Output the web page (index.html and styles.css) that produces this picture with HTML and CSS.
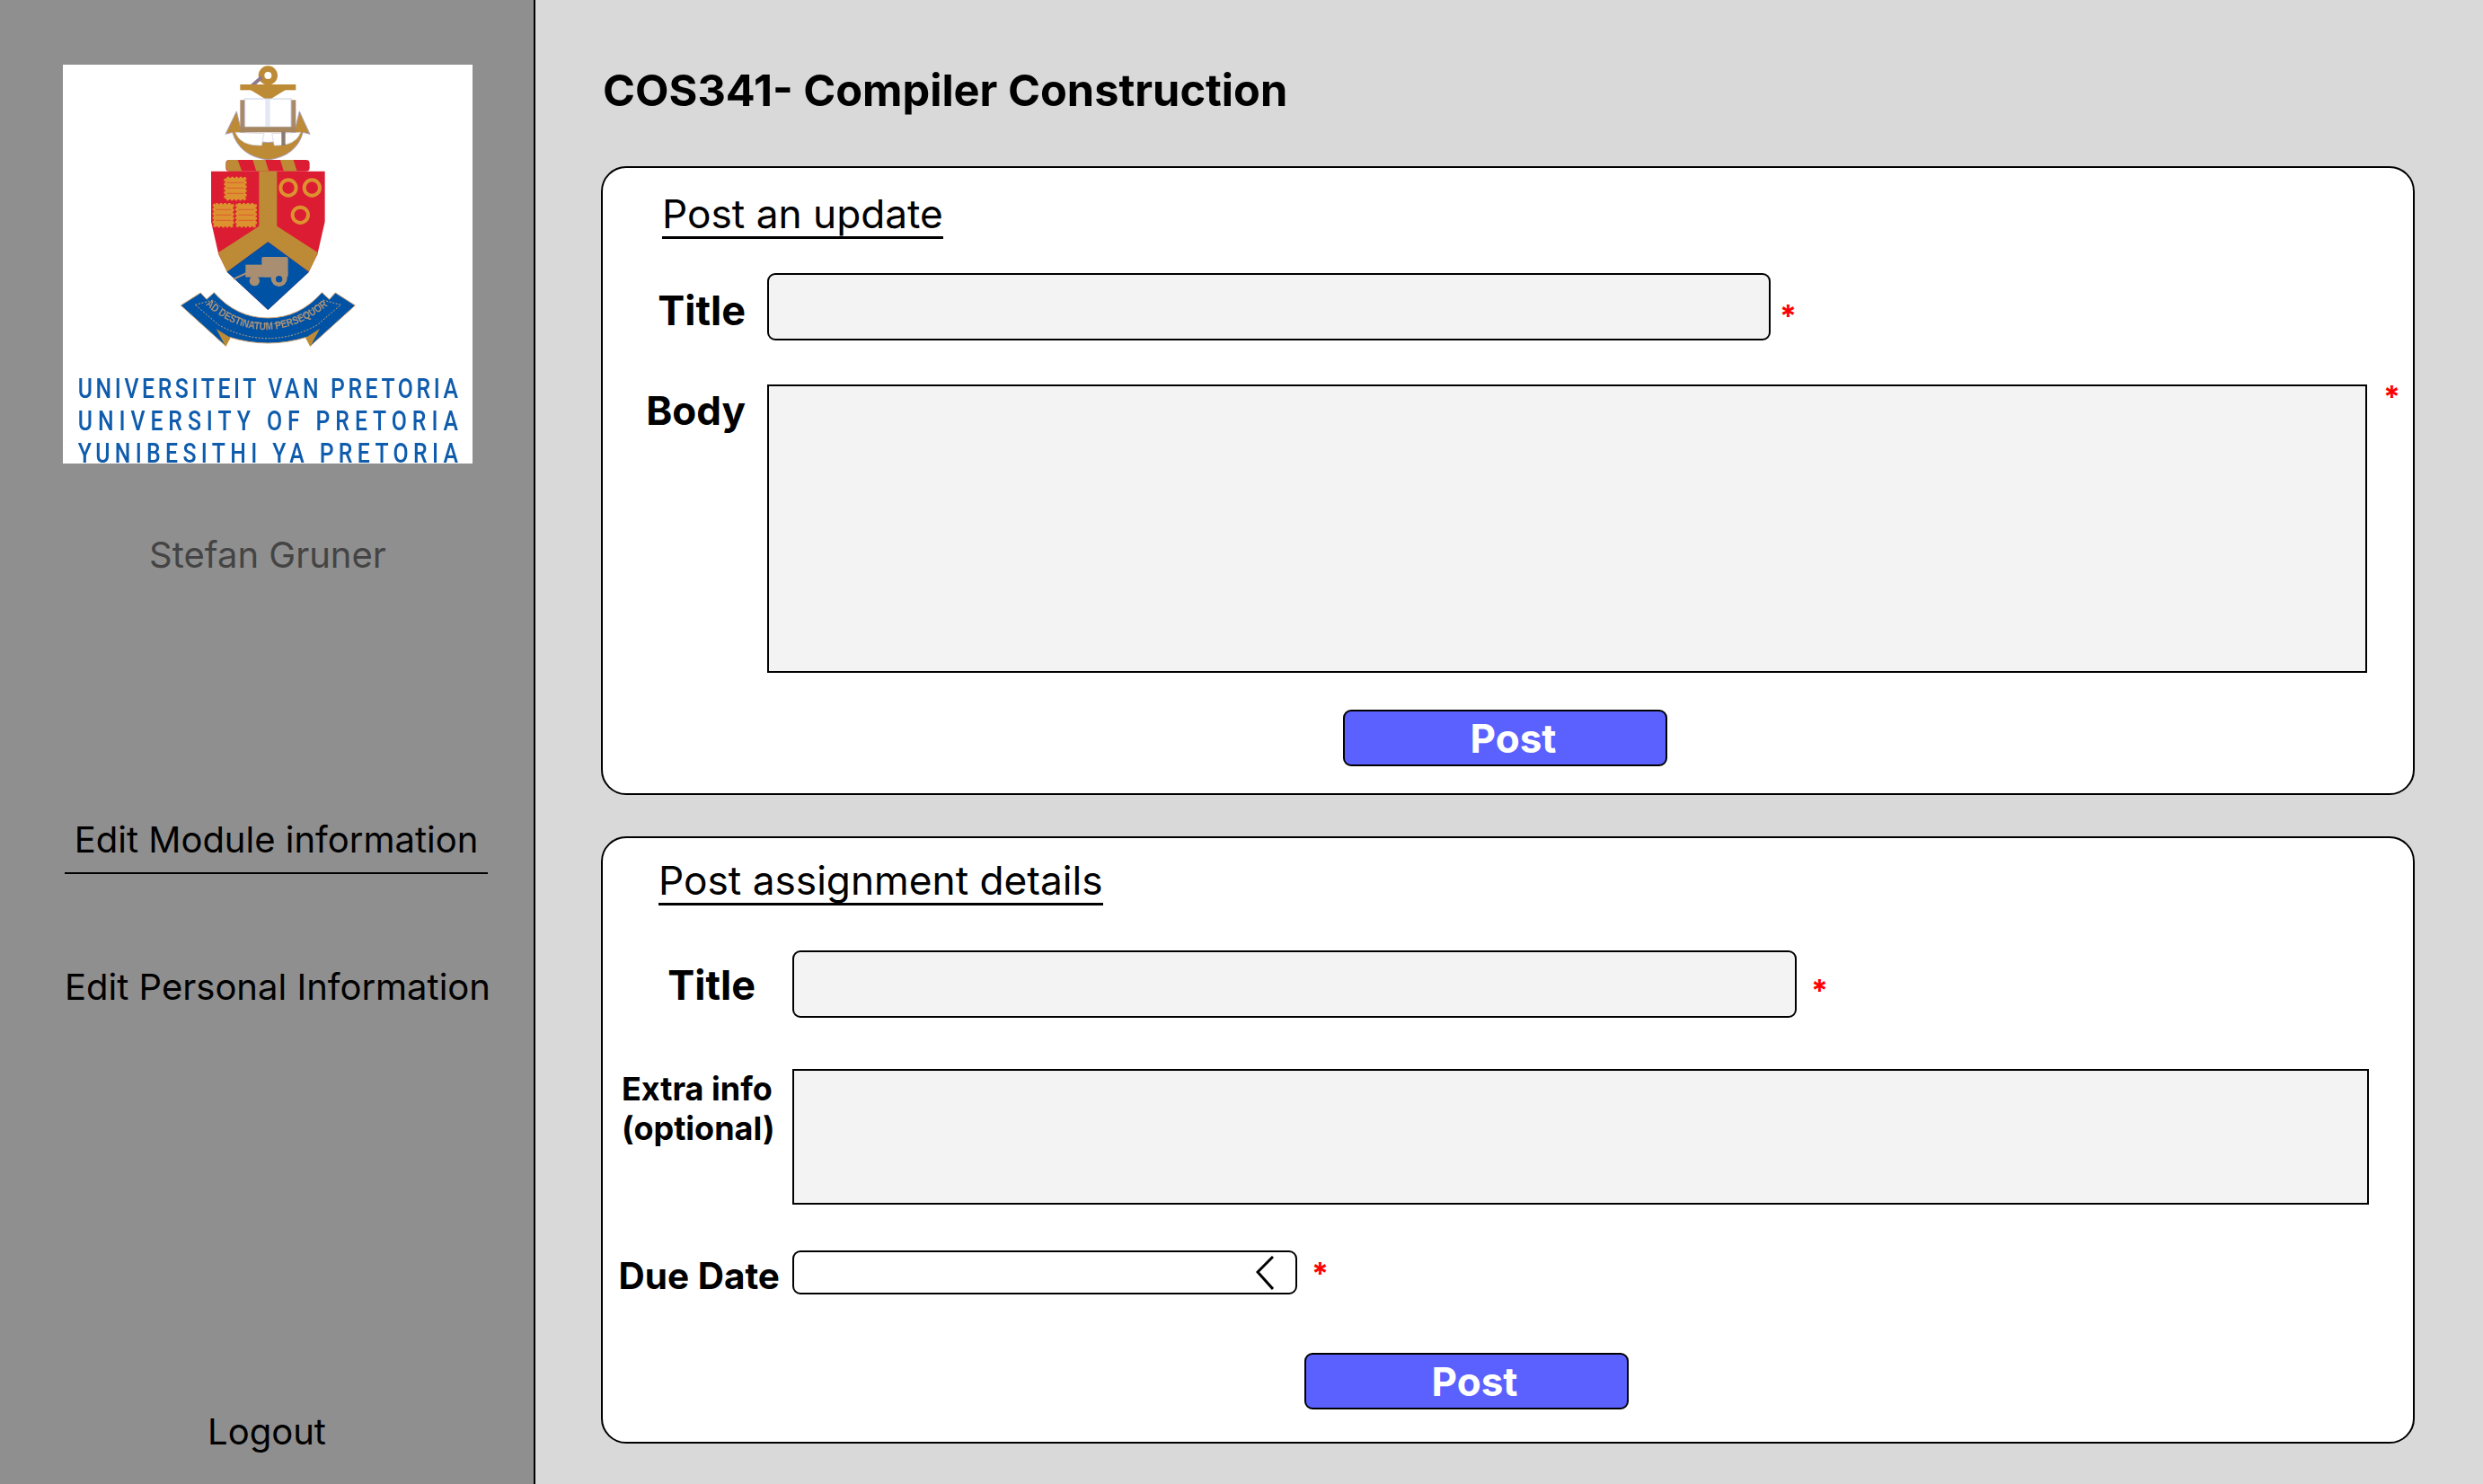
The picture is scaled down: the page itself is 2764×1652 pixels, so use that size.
FILE: index.html
```html
<!DOCTYPE html>
<html lang="en">
<head>
  <meta charset="UTF-8">
  <meta name="viewport" content="width=device-width, initial-scale=1.0">
  <title>COS341 - Compiler Construction</title>
  <link rel="stylesheet" href="styles.css">
</head>
<body>
  <!-- Sidebar -->
  <aside class="sidebar">
    <div class="logo">
      <svg class="logo-art" viewBox="0 0 456 444" width="456" height="444">
        <g transform="translate(110 -12) scale(.3333)">
          <!-- anchor -->
          <circle cx="355" cy="72" r="22" fill="none" stroke="#bd8a36" stroke-width="20"/>
          <path d="M302 106 L334 78" stroke="#8d7a8e" stroke-width="12"/>
          <rect x="262" y="102" width="186" height="19" fill="#bd8a36"/>
          <path d="M290 116 L355 156 L420 116 Z" fill="#bd8a36"/>
          <path d="M213 268 L250 192 L264 250 Q300 296 355 296 Q410 296 446 250 L460 192 L495 268 L472 262 Q450 342 355 354 Q260 342 236 262 Z" fill="#bd8a36" stroke="#a9a3c4" stroke-width="3"/>
          <path d="M246 262 Q262 308 334 306 L342 266 Z M464 262 Q448 308 376 306 L368 266 Z" fill="#fff" stroke="#c9cce0" stroke-width="2"/>
          <!-- book -->
          <rect x="262" y="154" width="18" height="96" fill="#a98a68"/>
          <rect x="430" y="154" width="18" height="96" fill="#a98a68"/>
          <rect x="278" y="150" width="154" height="94" fill="#fff" stroke="#c9cce0" stroke-width="3"/>
          <rect x="346" y="150" width="16" height="94" fill="#e4e8f2"/>
          <rect x="262" y="244" width="186" height="18" fill="#a5865f"/>
          <rect x="400" y="260" width="13" height="46" fill="#8d7a6e"/>
          <!-- wreath -->
          <rect x="214" y="354" width="280" height="38" rx="12" fill="#dc1c32"/>
          <path d="M214 368 Q216 354 228 354 L254 354 L268 392 L222 392 Q214 384 214 368 Z M304 354 L346 354 L358 392 L316 392 Z M396 354 L440 354 L452 392 L408 392 Z" fill="#bd8a36"/>
          <!-- shield -->
          <path d="M165 392 L545 392 L545 560 L520 670 L490 730 L355 855 L220 730 L190 670 L165 560 Z" fill="#dc1c32"/>
          <path d="M325 392 L385 392 L385 575 L522 664 L492 728 L355 628 L218 728 L188 664 L325 575 Z" fill="#bd8a36"/>
          <path d="M355 628 L492 728 L355 855 L218 728 Z" fill="#0052a5"/>
          <!-- wheat sheaves -->
          <g fill="#dd9230" stroke="#dd9230" stroke-width="8" stroke-dasharray="8 6">
            <rect x="212" y="414" width="68" height="72" rx="6"/>
            <rect x="174" y="502" width="64" height="74" rx="6"/>
            <rect x="250" y="502" width="64" height="74" rx="6"/>
          </g>
          <g fill="none" stroke="#dc1c32" stroke-width="3" opacity=".45">
            <path d="M218 430 H274 M218 448 H274 M218 466 H274 M180 520 H232 M180 538 H232 M180 556 H232 M256 520 H308 M256 538 H308 M256 556 H308"/>
          </g>
          <!-- rings -->
          <g fill="none" stroke="#dd9230" stroke-width="12">
            <circle cx="423" cy="447" r="26"/>
            <circle cx="502" cy="447" r="26"/>
            <circle cx="463" cy="538" r="26"/>
          </g>
          <!-- wagon -->
          <g fill="#a98e72">
            <rect x="334" y="678" width="88" height="68" rx="6"/>
            <rect x="280" y="704" width="56" height="42"/>
            <circle cx="310" cy="758" r="17"/>
            <circle cx="392" cy="750" r="27"/>
          </g>
          <circle cx="392" cy="752" r="11" fill="#0052a5"/>
          <path d="M240 752 L284 732" stroke="#a98e72" stroke-width="6"/>
          <!-- motto ribbon -->
          <path d="M64 840 L130 798 L150 820 L175 797 Q250 882 355 882 Q460 882 535 797 L560 820 L580 798 L646 840 L498 974 L484 946 Q420 966 355 966 Q290 966 226 946 L212 974 Z" fill="#0052a5" stroke="#c9a070" stroke-width="3"/>
          <path d="M182 918 L230 948 L214 978 Z M528 918 L480 948 L496 978 Z" fill="#bd8a36"/>
          <path d="M112 838 L172 822 Q250 902 355 902 Q460 902 538 822 L598 838 L520 905 Q440 950 355 950 Q270 950 190 905 Z" fill="none" stroke="#c9a070" stroke-width="3" stroke-dasharray="6 5"/>
          <path id="motto" d="M146 838 Q345 1008 566 832" fill="none"/>
          <text class="motto-text" fill="#ab9279">
            <textPath href="#motto" textLength="450" lengthAdjust="spacingAndGlyphs">AD DESTINATUM PERSEQUOR</textPath>
          </text>
        </g>
        <g class="logo-text" transform="scale(.8 1)">
          <text x="21" y="371" textLength="529">UNIVERSITEIT VAN PRETORIA</text>
          <text x="21" y="407" textLength="529">UNIVERSITY OF PRETORIA</text>
          <text x="21" y="443" textLength="529">YUNIBESITHI YA PRETORIA</text>
        </g>
      </svg>
    </div>
    <div class="user-name">Stefan Gruner</div>
    <nav class="side-nav">
      <a class="side-link active" href="#">Edit Module information</a>
      <a class="side-link" href="#">Edit Personal Information</a>
    </nav>
    <a class="logout" href="#">Logout</a>
  </aside>

  <main class="content">
    <h1 class="page-title">COS341- Compiler Construction</h1>

    <!-- Post an update -->
    <section class="panel panel-update">
      <h2 class="panel-title title-update">Post an update</h2>
      <div class="row row-title">
        <label class="field-label">Title</label>
        <input class="field input-update" type="text">
        <span class="req">*</span>
      </div>
      <div class="row row-body">
        <label class="field-label">Body</label>
        <textarea class="field area area-body"></textarea>
        <span class="req">*</span>
      </div>
      <button class="post-btn btn-update">Post</button>
    </section>

    <!-- Post assignment details -->
    <section class="panel panel-assign">
      <h2 class="panel-title title-assign">Post assignment details</h2>
      <div class="row row-a-title">
        <label class="field-label label-a-title">Title</label>
        <input class="field input-assign" type="text">
        <span class="req">*</span>
      </div>
      <div class="row row-extra">
        <label class="field-label label-extra">Extra info<br>(optional)</label>
        <textarea class="field area area-extra"></textarea>
      </div>
      <div class="row row-due">
        <label class="field-label label-due">Due Date</label>
        <div class="date-field">
          <svg class="chevron" viewBox="0 0 20 38" width="20" height="38">
            <path d="M19 1 L2 18 L19 37" fill="none" stroke="#000" stroke-width="3"/>
          </svg>
        </div>
        <span class="req">*</span>
      </div>
      <button class="post-btn btn-assign">Post</button>
    </section>
  </main>
</body>
</html>
```

FILE: styles.css
```css
/* General */
* {
  box-sizing: border-box;
}

html, body {
  height: 100%;
}

body {
  margin: 0;
  display: flex;
  height: 1652px;
  overflow: hidden;
  font-family: 'Inter', 'Liberation Sans', sans-serif;
  background-color: #d9d9d9;
  color: #000;
}

/* Sidebar */
.sidebar {
  width: 596px;
  flex-shrink: 0;
  display: flex;
  flex-direction: column;
  background-color: #8f8f8f;
  border-right: 2px solid #000;
  padding-top: 72px;
  font-size: 40px;
}

.logo {
  width: 456px;
  height: 444px;
  margin-left: 70px;
  background-color: #fff;
}

.logo-art {
  display: block;
  overflow: visible;
  filter: blur(0.7px);
}

.logo-text {
  font-family: 'Roboto', 'Liberation Sans', sans-serif;
  font-weight: 500;
  font-size: 31px;
  fill: #0f5cad;
}

.motto-text {
  font-family: 'Liberation Sans', sans-serif;
  font-weight: 700;
  font-size: 36px;
}

.user-name {
  margin-top: 76px;
  padding-left: 2px;
  text-align: center;
  color: #444;
  line-height: 52px;
}

.side-nav {
  display: flex;
  flex-direction: column;
  margin-top: 265px;
  margin-left: 72px;
  width: 473px;
}

.side-link {
  color: #000;
  text-decoration: none;
  white-space: nowrap;
  line-height: 52px;
}

.side-link.active {
  width: 471px;
  text-align: center;
  padding-bottom: 10px;
  border-bottom: 2px solid #000;
}

.side-link + .side-link {
  margin-top: 100px;
}

.logout {
  margin-top: auto;
  margin-bottom: 32px;
  text-align: center;
  color: #000;
  text-decoration: none;
  line-height: 52px;
}

/* Main content */
.content {
  flex: 1;
  padding: 0 76px 0 73px;
}

.page-title {
  margin: 0;
  padding: 66px 0 0 2px;
  font-size: 48.7px;
  font-weight: 700;
  line-height: 70px;
  height: 185px;
}

/* Panels */
.panel {
  background-color: #fff;
  border: 2px solid #000;
  border-radius: 28px;
  margin-bottom: 46px;
}

.panel-update {
  height: 700px;
}

.panel-assign {
  height: 676px;
}

.panel-title {
  display: inline-block;
  margin: 0;
  font-size: 44.2px;
  font-weight: 400;
  line-height: 50px;
  border-bottom: 3px solid #000;
}

.title-update {
  margin: 26px 0 0 66px;
}

.title-assign {
  margin: 22px 0 0 62px;
}

/* Form rows */
.row {
  display: flex;
  align-items: flex-start;
}

.row-title {
  margin-top: 38px;
}

.row-body {
  margin-top: 45px;
}

.row-a-title {
  margin-top: 50px;
}

.row-extra {
  margin-top: 56px;
}

.row-due {
  margin-top: 51px;
}

.field-label {
  width: 183px;
  flex-shrink: 0;
  padding-top: 4px;
  padding-right: 24px;
  text-align: right;
  font-size: 44px;
  font-weight: 700;
  line-height: 75px;
}

.row-title .field-label,
.label-a-title {
  font-size: 45px;
}

.row-body .field-label {
  line-height: 54px;
  padding-top: 2px;
}

.label-a-title,
.label-extra,
.label-due {
  width: 211px;
}

.label-a-title {
  padding-top: 1px;
  padding-right: 41px;
}

.label-extra {
  padding-top: 0;
  padding-right: 0;
  padding-left: 21px;
  text-align: left;
  white-space: nowrap;
  font-size: 36px;
  line-height: 44px;
}

.label-due {
  padding-top: 5px;
  padding-right: 14px;
  font-size: 40.5px;
  line-height: 48px;
  white-space: nowrap;
}

.field {
  display: block;
  margin: 0;
  padding: 0;
  border: 2px solid #000;
  background-color: #f3f3f3;
  outline: none;
}

.input-update {
  width: 1117px;
  height: 75px;
  border-radius: 9px;
}

.input-assign {
  width: 1118px;
  height: 75px;
  border-radius: 9px;
}

.area {
  resize: none;
  border-radius: 0;
}

.area-body {
  width: 1781px;
  height: 321px;
}

.area-extra {
  width: 1755px;
  height: 151px;
}

.date-field {
  width: 562px;
  height: 49px;
  display: flex;
  align-items: center;
  justify-content: flex-end;
  padding-right: 24px;
  background-color: #fff;
  border: 2px solid #000;
  border-radius: 9px;
}

.chevron {
  display: block;
}

.req {
  color: #f00;
  font-weight: 700;
  font-size: 34px;
  line-height: 40px;
}

.row-title .req {
  margin: 28px 0 0 10px;
}

.row-body .req {
  margin: -6px 0 0 18px;
}

.row-a-title .req {
  margin: 25px 0 0 16px;
}

.row-due .req {
  margin: 6px 0 0 16px;
}

/* Buttons */
.post-btn {
  display: block;
  height: 63px;
  width: 361px;
  padding: 0 0 0 18px;
  font-family: inherit;
  font-size: 44px;
  font-weight: 700;
  line-height: 1;
  color: #fff;
  background-color: #5b61ff;
  border: 2px solid #000;
  border-radius: 9px;
}

.btn-update {
  margin: 41px 0 0 824px;
}

.btn-assign {
  margin: 61px 0 0 781px;
}
```
